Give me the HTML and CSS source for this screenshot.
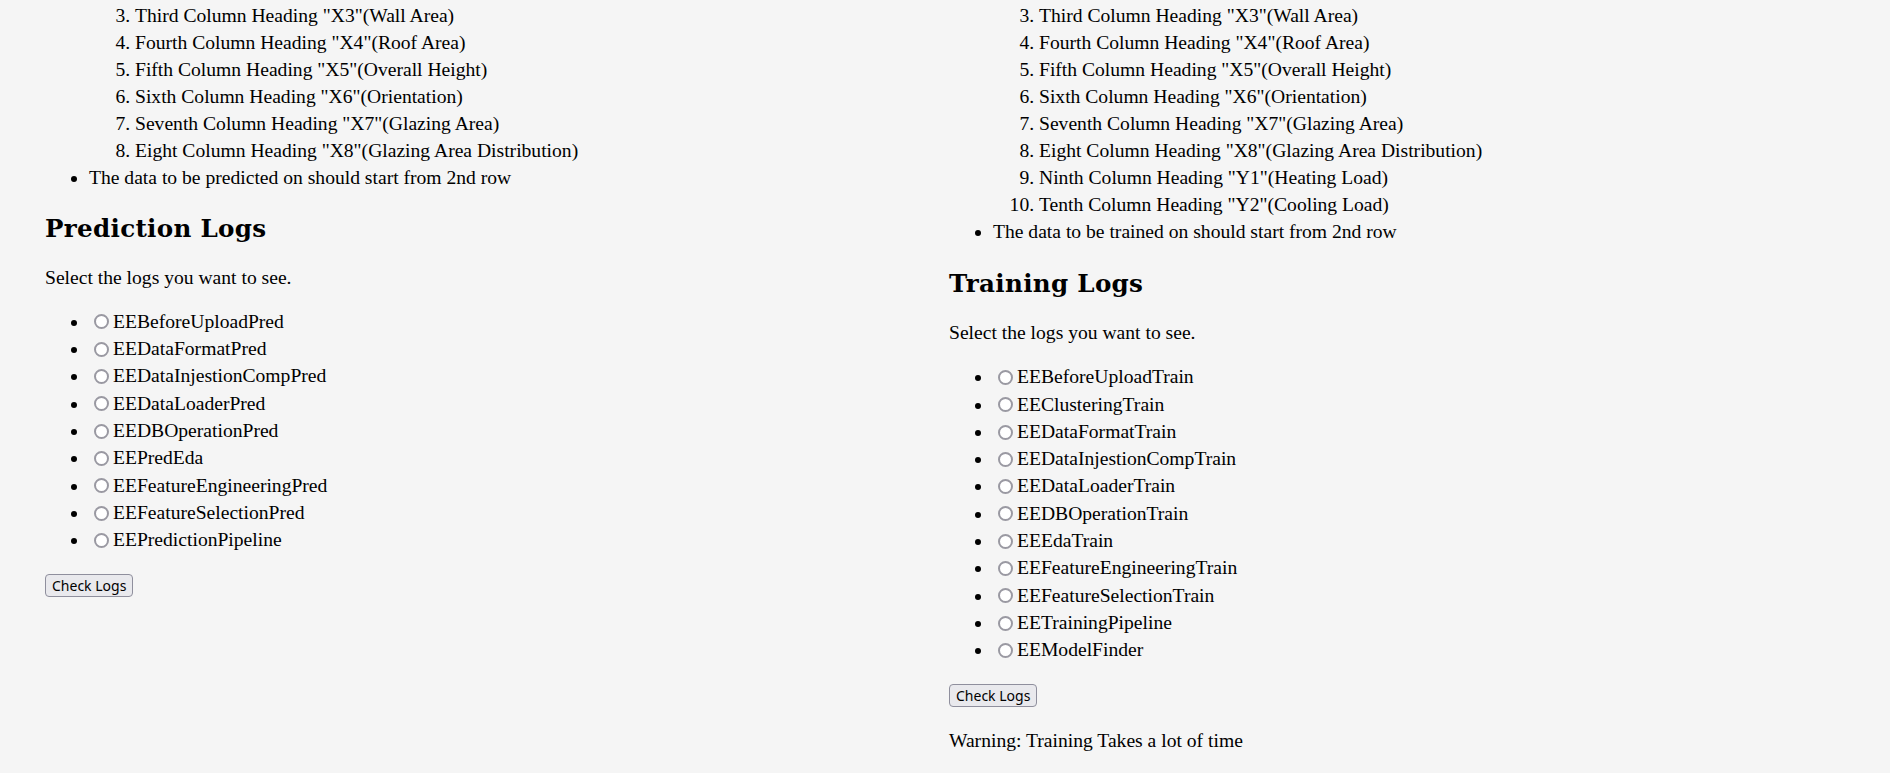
FILE: index.html
```html
<!DOCTYPE html>
<html>
<head>
<meta charset="utf-8">
<title>Logs</title>
<link rel="stylesheet" href="styles.css">
</head>
<body>
<div class="page">
  <section class="col">
    <ul class="notes">
      <li class="nested">
        <ol class="headings" start="3">
          <li>Third Column Heading "X3"(Wall Area)</li>
          <li>Fourth Column Heading "X4"(Roof Area)</li>
          <li>Fifth Column Heading "X5"(Overall Height)</li>
          <li>Sixth Column Heading "X6"(Orientation)</li>
          <li>Seventh Column Heading "X7"(Glazing Area)</li>
          <li>Eight Column Heading "X8"(Glazing Area Distribution)</li>
        </ol>
      </li>
      <li>The data to be predicted on should start from 2nd row</li>
    </ul>
    <h2 class="title">Prediction Logs</h2>
    <p class="text">Select the logs you want to see.</p>
    <ul class="logs">
      <li><label><input type="radio" name="pred" class="radio">EEBeforeUploadPred</label></li>
      <li><label><input type="radio" name="pred" class="radio">EEDataFormatPred</label></li>
      <li><label><input type="radio" name="pred" class="radio">EEDataInjestionCompPred</label></li>
      <li><label><input type="radio" name="pred" class="radio">EEDataLoaderPred</label></li>
      <li><label><input type="radio" name="pred" class="radio">EEDBOperationPred</label></li>
      <li><label><input type="radio" name="pred" class="radio">EEPredEda</label></li>
      <li><label><input type="radio" name="pred" class="radio">EEFeatureEngineeringPred</label></li>
      <li><label><input type="radio" name="pred" class="radio">EEFeatureSelectionPred</label></li>
      <li><label><input type="radio" name="pred" class="radio">EEPredictionPipeline</label></li>
    </ul>
    <button class="btn" type="button">Check Logs</button>
  </section>
  <section class="col col-right">
    <ul class="notes">
      <li class="nested">
        <ol class="headings" start="3">
          <li>Third Column Heading "X3"(Wall Area)</li>
          <li>Fourth Column Heading "X4"(Roof Area)</li>
          <li>Fifth Column Heading "X5"(Overall Height)</li>
          <li>Sixth Column Heading "X6"(Orientation)</li>
          <li>Seventh Column Heading "X7"(Glazing Area)</li>
          <li>Eight Column Heading "X8"(Glazing Area Distribution)</li>
          <li>Ninth Column Heading "Y1"(Heating Load)</li>
          <li>Tenth Column Heading "Y2"(Cooling Load)</li>
        </ol>
      </li>
      <li>The data to be trained on should start from 2nd row</li>
    </ul>
    <h2 class="title">Training Logs</h2>
    <p class="text">Select the logs you want to see.</p>
    <ul class="logs">
      <li><label><input type="radio" name="train" class="radio">EEBeforeUploadTrain</label></li>
      <li><label><input type="radio" name="train" class="radio">EEClusteringTrain</label></li>
      <li><label><input type="radio" name="train" class="radio">EEDataFormatTrain</label></li>
      <li><label><input type="radio" name="train" class="radio">EEDataInjestionCompTrain</label></li>
      <li><label><input type="radio" name="train" class="radio">EEDataLoaderTrain</label></li>
      <li><label><input type="radio" name="train" class="radio">EEDBOperationTrain</label></li>
      <li><label><input type="radio" name="train" class="radio">EEEdaTrain</label></li>
      <li><label><input type="radio" name="train" class="radio">EEFeatureEngineeringTrain</label></li>
      <li><label><input type="radio" name="train" class="radio">EEFeatureSelectionTrain</label></li>
      <li><label><input type="radio" name="train" class="radio">EETrainingPipeline</label></li>
      <li><label><input type="radio" name="train" class="radio">EEModelFinder</label></li>
    </ul>
    <button class="btn" type="button">Check Logs</button>
    <p class="text warn">Warning: Training Takes a lot of time</p>
  </section>
</div>
</body>
</html>
```

FILE: styles.css
```css
html, body {
  margin: 0;
  padding: 0;
  background: #f5f5f5;
  color: #000;
}

body {
  font-family: "Liberation Serif", "Times New Roman", serif;
  font-size: 19.6px;
  line-height: 27px;
}

.page {
  display: grid;
  grid-template-columns: 904px 1fr;
  padding: 1.7px 0 0 45px;
}

.col {
  min-width: 0;
}

.notes {
  margin: 0;
  padding-left: 44px;
  list-style: disc;
}

.nested {
  list-style: none;
}

.headings {
  margin: 0;
  padding-left: 46px;
}

.title {
  font-family: "DejaVu Serif", "Liberation Serif", serif;
  font-weight: bold;
  font-size: 24.6px;
  letter-spacing: 0.3px;
  line-height: 33px;
  margin: 21px 0 0;
}

.col-right .title {
  margin-top: 22.5px;
}

.text {
  margin: 19.3px 0 0;
}

.logs {
  margin: 16.8px 0 0;
  padding-left: 44px;
  list-style: disc;
}

.logs li {
  line-height: 27.3px;
}

.radio {
  appearance: none;
  -webkit-appearance: none;
  box-sizing: border-box;
  width: 15px;
  height: 15px;
  margin: 0 4px 0 5px;
  border: 2px solid #9a99a2;
  border-radius: 50%;
  background: #fff;
  vertical-align: -1.7px;
}

.btn {
  display: block;
  margin: 20.5px 0 0;
  padding: 0 6px;
  height: 23.4px;
  box-sizing: border-box;
  font-family: "Noto Sans", "Open Sans", sans-serif;
  font-size: 14px;
  line-height: 20px;
  color: #000;
  background: #e9e9ed;
  border: 1px solid #8f8f9d;
  border-radius: 4px;
}

.warn {
  margin-top: 19.3px;
}
```
